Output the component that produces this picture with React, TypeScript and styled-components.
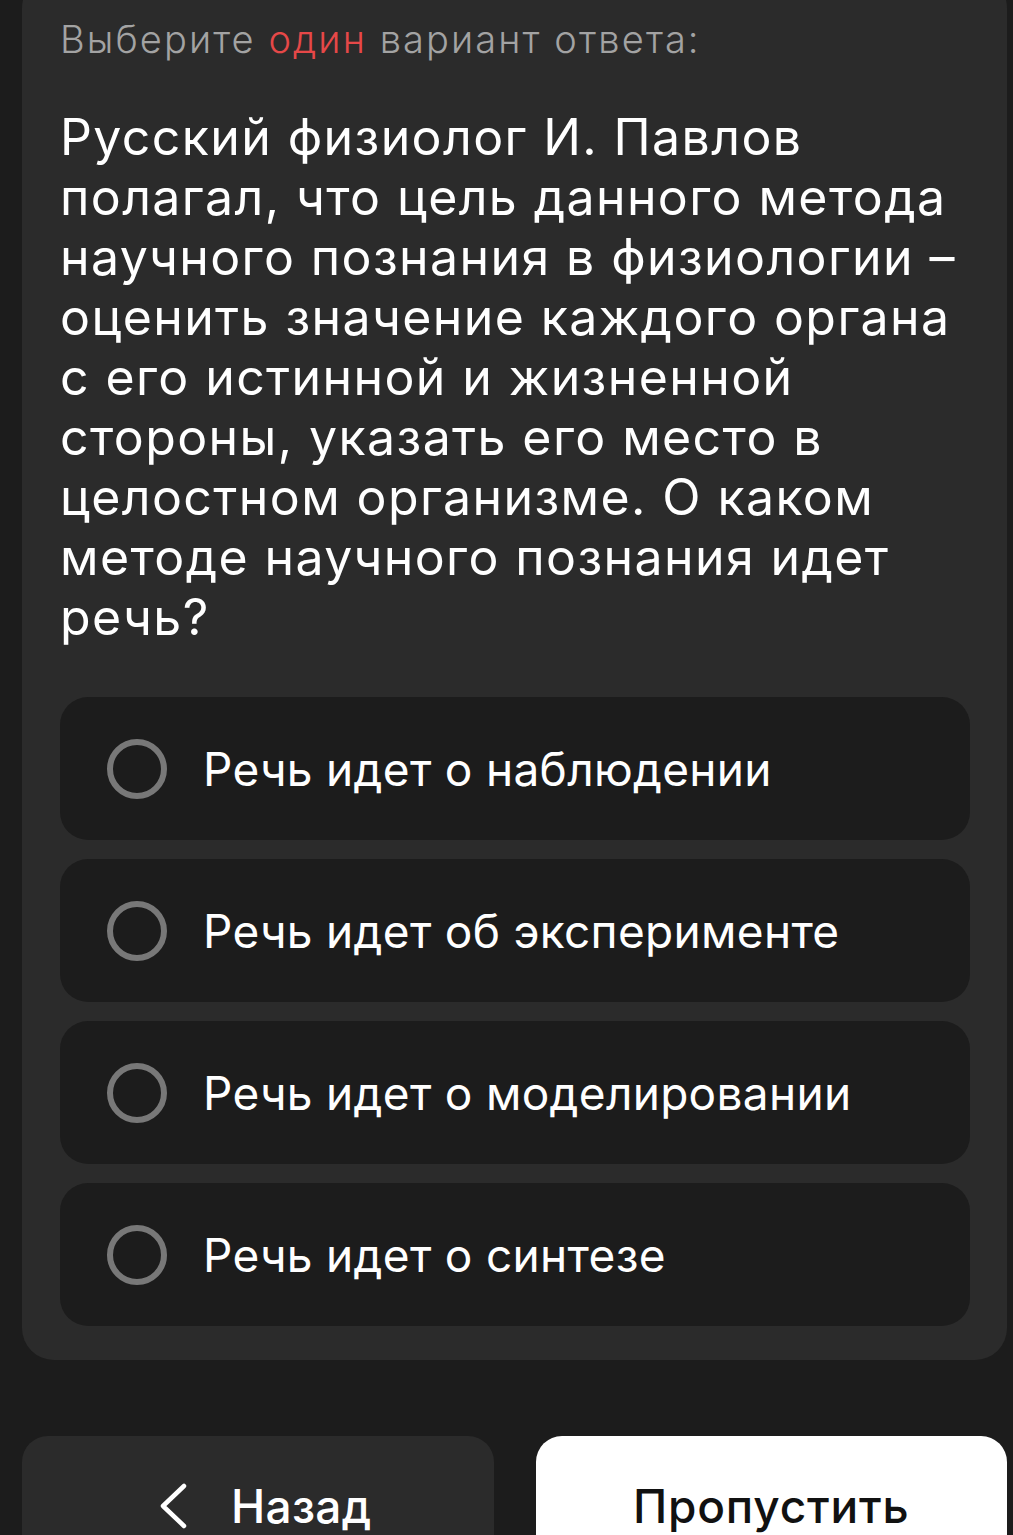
import * as React from 'react'
import styled, { createGlobalStyle } from 'styled-components'

// ______________________________________________________
//
// @ Data

const options = [
  'Речь идет о наблюдении',
  'Речь идет об эксперименте',
  'Речь идет о моделировании',
  'Речь идет о синтезе',
]

// line breaks follow the original layout
const questionLines = [
  'Русский физиолог И. Павлов',
  'полагал, что цель данного метода',
  'научного познания в физиологии –',
  'оценить значение каждого органа',
  'с его истинной и жизненной',
  'стороны, указать его место в',
  'целостном организме. О каком',
  'методе научного познания идет',
  'речь?',
]

// ______________________________________________________
//
// @ Styles

const GlobalStyle = createGlobalStyle`
  html, body {
    margin: 0;
    padding: 0;
    background: #1c1c1c;
    overflow: hidden;
  }
  body {
    font-family: Inter, "Noto Sans", sans-serif;
    -webkit-font-smoothing: antialiased;
  }
`

const Page = styled.div`
  display: flex;
  flex-direction: column;
  gap: 76px;
  padding: 0 6px 0 22px;
  margin-top: -24px;
`

const Card = styled.section`
  background: #2b2b2b;
  border-radius: 32px;
  padding: 40px 37px 34px 38px;
  display: flex;
  flex-direction: column;
`

const Hint = styled.div`
  font-size: 38px;
  line-height: 46px;
  font-weight: 300;
  letter-spacing: 2.1px;
  color: #a3a3a3;
  > em {
    font-style: normal;
    color: #e64848;
  }
`

const Question = styled.h1`
  margin: 45px 0 50px;
  font-size: 50px;
  line-height: 60px;
  font-weight: 400;
  letter-spacing: 1.4px;
  color: #ffffff;
  white-space: nowrap;
  > span {
    display: block;
  }
`

const OptionList = styled.div`
  display: flex;
  flex-direction: column;
  gap: 19px;
`

const Option = styled.div`
  height: 143px;
  box-sizing: border-box;
  background: #1c1c1c;
  border-radius: 28px;
  padding-left: 47px;
  display: flex;
  align-items: center;
  gap: 36px;
  font-size: 46px;
  letter-spacing: 0.3px;
  color: #ffffff;
`

const Radio = styled.span`
  width: 60px;
  height: 60px;
  box-sizing: border-box;
  border: 6px solid #787878;
  border-radius: 50%;
  flex-shrink: 0;
`

const Actions = styled.div`
  display: grid;
  grid-template-columns: 1fr 1fr;
  gap: 42px;
`

const Button = styled.button<{ $primary?: boolean }>`
  height: 140px;
  border: none;
  border-radius: 26px;
  background: ${p => (p.$primary ? '#ffffff' : '#2b2b2b')};
  color: ${p => (p.$primary ? '#111111' : '#ffffff')};
  font-family: inherit;
  font-size: 46px;
  font-weight: 500;
  letter-spacing: ${p => (p.$primary ? '0.8px' : '0.3px')};
  display: flex;
  align-items: center;
  justify-content: center;
  gap: 44px;
  padding: 0 0 0 ${p => (p.$primary ? '0' : '16px')};
  cursor: pointer;
`

const Chevron = () => (
  <svg width="27" height="46" viewBox="0 0 27 46" fill="none">
    <polyline
      points="24,3 3,23 24,43"
      stroke="#ffffff"
      strokeWidth="4.5"
      strokeLinecap="round"
      strokeLinejoin="round"
    />
  </svg>
)

// ______________________________________________________
//
// @ View

const App: React.FC = () => (
  <>
    <GlobalStyle />
    <Page>
      <Card>
        <Hint>
          Выберите <em>один</em> вариант ответа:
        </Hint>
        <Question>
          {questionLines.map(line => (
            <span key={line}>{line}</span>
          ))}
        </Question>
        <OptionList>
          {options.map(text => (
            <Option key={text}>
              <Radio />
              {text}
            </Option>
          ))}
        </OptionList>
      </Card>
      <Actions>
        <Button>
          <Chevron />
          Назад
        </Button>
        <Button $primary>Пропустить</Button>
      </Actions>
    </Page>
  </>
)

export default App
